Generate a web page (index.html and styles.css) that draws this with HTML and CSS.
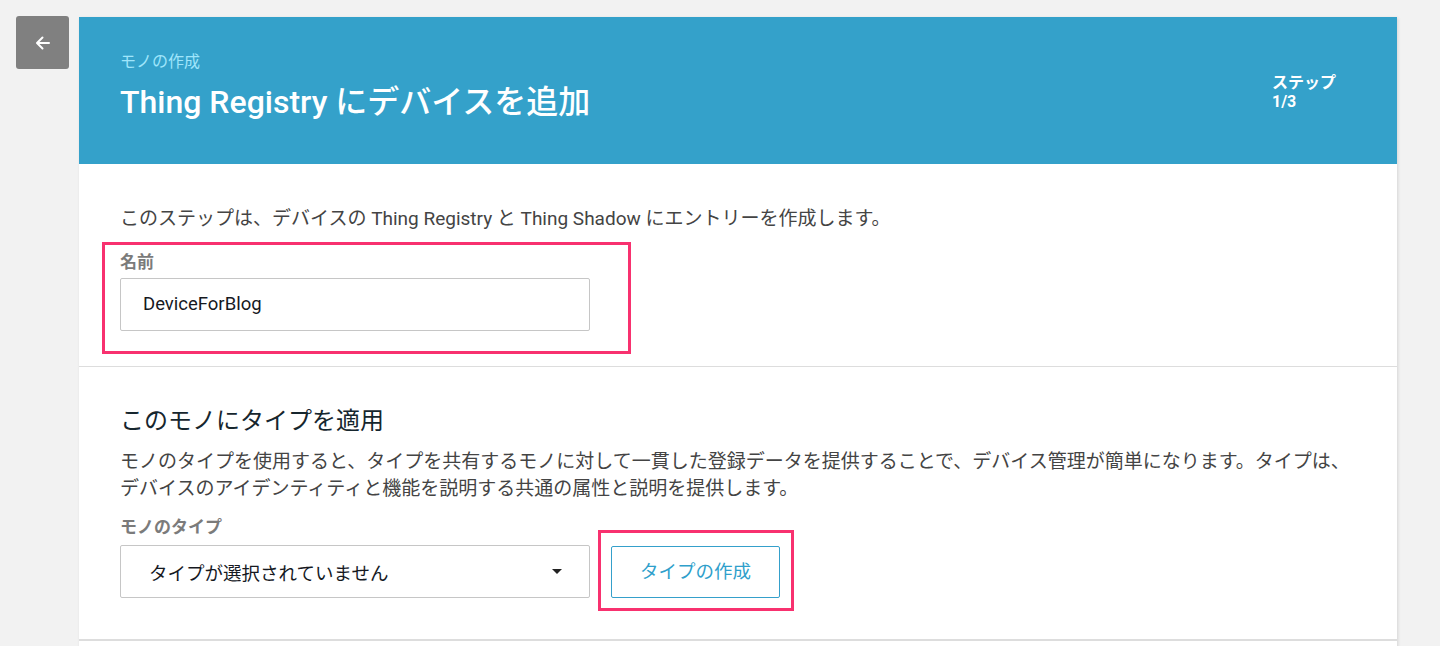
FILE: index.html
```html
<!DOCTYPE html>
<html lang="ja">
<head>
	<meta charset="UTF-8">
	<title>Thing Registry にデバイスを追加</title>
	<link rel="stylesheet" href="styles.css">
</head>
<body>
	<div class="page">
		<a href="javascript:;" class="back-btn">
			<svg width="18" height="18" viewBox="0 0 18 18">
				<path d="M15 9H3.5M8.5 3.5L3 9l5.5 5.5" fill="none" stroke="#fff" stroke-width="2" stroke-linecap="round" stroke-linejoin="round"/>
			</svg>
		</a>
		<div class="card">
			<div class="card-head">
				<div class="head-main">
					<p class="head-sub">モノの作成</p>
					<h1 class="head-title">Thing Registry にデバイスを追加</h1>
				</div>
				<div class="head-step">
					<p>ステップ</p>
					<p>1/3</p>
				</div>
			</div>
			<div class="section section-name">
				<p class="intro">このステップは、デバイスの Thing Registry と Thing Shadow にエントリーを作成します。</p>
				<div class="mark name-field">
					<label class="field-label">名前</label>
					<div class="input">DeviceForBlog</div>
				</div>
			</div>
			<div class="section section-type">
				<h2 class="sec-title">このモノにタイプを適用</h2>
				<p class="sec-desc">モノのタイプを使用すると、タイプを共有するモノに対して一貫した登録データを提供することで、デバイス管理が簡単になります。タイプは、<br>デバイスのアイデンティティと機能を説明する共通の属性と説明を提供します。</p>
				<div class="type-row">
					<div class="type-col">
						<label class="field-label">モノのタイプ</label>
						<div class="select">
							<span>タイプが選択されていません</span>
							<i class="caret"></i>
						</div>
					</div>
					<div class="mark btn-mark">
						<a href="javascript:;" class="btn">タイプの作成</a>
					</div>
				</div>
			</div>
			<div class="section section-next"></div>
		</div>
	</div>
</body>
</html>
```

FILE: styles.css
```css
*{
	margin: 0;
	padding: 0;
	box-sizing: border-box;
}
body{
	background-color: #f2f2f2;
	font-family: Roboto, "Noto Sans CJK JP", sans-serif;
	color: #444;
	overflow: hidden;
}
a{
	text-decoration: none;
}
.page{
	display: flex;
	align-items: flex-start;
	gap: 10px;
	padding: 16px 43px 0 16px;
}
.back-btn{
	display: flex;
	align-items: center;
	justify-content: center;
	flex: none;
	width: 53px;
	height: 53px;
	border-radius: 3px;
	background-color: #808080;
}
.card{
	flex: 1;
	margin-top: 1px;
	background-color: #fff;
	box-shadow: 1px 1px 3px rgba(0,0,0,.12);
}
.card-head{
	display: flex;
	height: 147px;
	padding: 33px 62px 0 41px;
	background-color: #34a1ca;
}
.head-main{
	flex: 1;
}
.head-sub{
	font-size: 16px;
	line-height: 24px;
	color: #9fe5fb;
}
.head-title{
	margin-top: 8px;
	font-size: 32px;
	line-height: 40px;
	font-weight: 500;
	color: #fff;
}
.head-step{
	width: 63px;
	padding-top: 23px;
	font-size: 16px;
	line-height: 19px;
	font-weight: 700;
	color: #fff;
	white-space: nowrap;
}
.section{
	padding: 0 41px;
	border-bottom: 1px solid #ddd;
}
.section-name{
	padding-top: 41px;
	padding-bottom: 12px;
}
.intro{
	font-size: 19px;
	line-height: 27px;
	color: #444;
}
.mark{
	border: 3px solid #f8316f;
}
.name-field{
	width: 529px;
	margin: 10px 0 0 -18px;
	padding: 5px 38px 20px 15px;
}
.field-label{
	display: block;
	font-size: 17px;
	line-height: 24px;
	font-weight: 700;
	color: #7b7b7b;
}
.input{
	height: 53px;
	margin-top: 4px;
	padding: 0 22px;
	border: 1px solid #c6c6c6;
	border-radius: 2px;
	font-size: 18.5px;
	line-height: 51px;
	color: #16191f;
}
.section-type{
	padding-top: 38px;
	padding-bottom: 41px;
	border-bottom: 2px solid #ddd;
}
.sec-title{
	font-size: 24px;
	line-height: 32px;
	font-weight: 400;
	color: #16262e;
}
.sec-desc{
	margin-top: 11px;
	font-size: 19px;
	line-height: 27px;
	color: #444;
}
.type-row{
	display: flex;
	align-items: flex-end;
	gap: 8px;
	margin-top: 13px;
}
.type-col{
	width: 470px;
}
.select{
	display: flex;
	align-items: center;
	justify-content: space-between;
	height: 53px;
	margin-top: 6px;
	padding: 0 27px 0 28px;
	border: 1px solid #c6c6c6;
	border-radius: 2px;
	font-size: 18.5px;
	color: #16191f;
}
.caret{
	width: 0;
	height: 0;
	border-left: 5px solid transparent;
	border-right: 5px solid transparent;
	border-top: 5px solid #222;
}
.btn-mark{
	margin-bottom: -13px;
	padding: 13px 11px 10px 10px;
}
.btn{
	display: block;
	width: 169px;
	height: 52px;
	border: 1px solid #35a0cb;
	border-radius: 2px;
	font-size: 18.5px;
	line-height: 50px;
	text-align: center;
	color: #2f9fcb;
}
.section-next{
	height: 20px;
	border-bottom: none;
}
```
